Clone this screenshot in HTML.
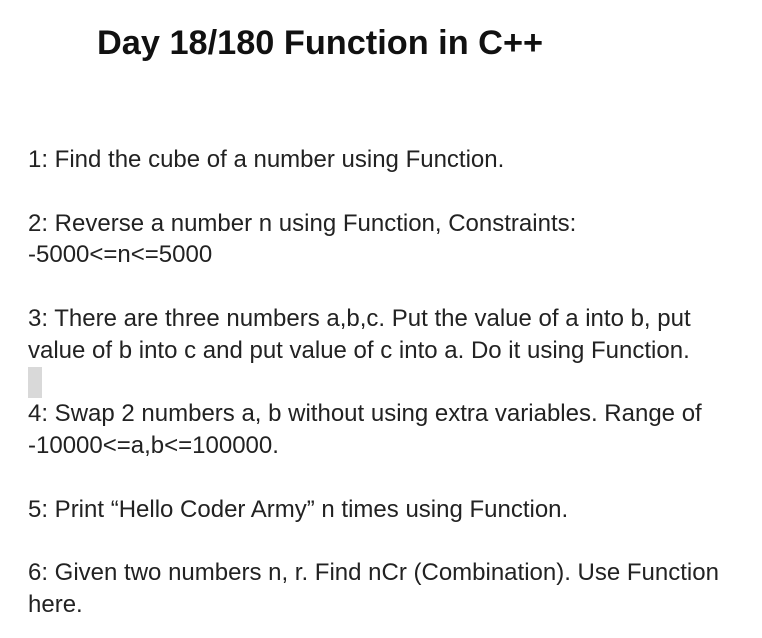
<!DOCTYPE html>
<html><head><style>
body{margin:0;background:#fff;width:762px;height:638px;position:relative;overflow:hidden;font-family:"Liberation Sans",Arial,sans-serif;color:#222}
.t{position:absolute;left:97px;top:22px;font-size:34.3px;font-weight:bold;color:#111;line-height:42px;white-space:nowrap}
.l{position:absolute;left:28px;font-size:24px;line-height:32px;white-space:nowrap}
.g{position:absolute;left:28px;top:367px;width:14px;height:31px;background:#d9d9d9}
</style></head><body>
<div class="t">Day 18/180 Function in C++</div>
<div class="l" style="top:144px">1: Find the cube of a number using Function.</div>
<div class="l" style="top:208px">2: Reverse a number n using Function, Constraints:</div>
<div class="l" style="top:239px">-5000&lt;=n&lt;=5000</div>
<div class="l" style="top:303px">3: There are three numbers a,b,c. Put the value of a into b, put</div>
<div class="l" style="top:335px">value of b into c and put value of c into a. Do it using Function.</div>
<div class="g"></div>
<div class="l" style="top:398px">4: Swap 2 numbers a, b without using extra variables. Range of</div>
<div class="l" style="top:430px">-10000&lt;=a,b&lt;=100000.</div>
<div class="l" style="top:494px">5: Print “Hello Coder Army” n times using Function.</div>
<div class="l" style="top:557px">6: Given two numbers n, r. Find nCr (Combination). Use Function</div>
<div class="l" style="top:589px">here.</div>
</body></html>
